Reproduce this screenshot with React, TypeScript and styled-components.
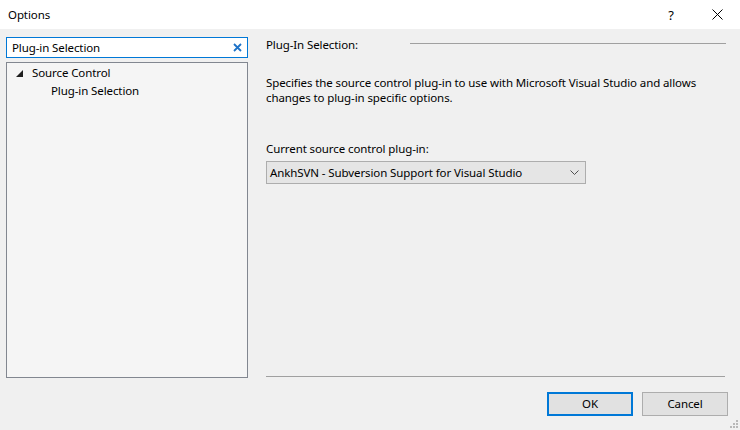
import React from "react";
import styled, { createGlobalStyle } from "styled-components";

const Global = createGlobalStyle`
  html, body { margin: 0; padding: 0; background: #f0f0f0; }
  body { font-family: "Noto Sans", "Segoe UI", sans-serif; font-size: 11.5px; letter-spacing: -0.1px; color: #000; }
`;

const Window = styled.div`
  width: 740px;
  height: 430px;
  display: flex;
  flex-direction: column;
  background: #f0f0f0;
  position: relative;
  overflow: hidden;
`;

const TitleBar = styled.div`
  height: 29px;
  background: #ffffff;
  display: flex;
  align-items: center;
  padding-left: 8px;
`;

const TitleText = styled.span`
  flex: 1;
  line-height: 16px;
`;

const TitleButton = styled.div<{ $w: number }>`
  width: ${(p) => p.$w}px;
  height: 29px;
  display: flex;
  align-items: center;
  justify-content: center;
  font-size: 13px;
`;

const Content = styled.div`
  flex: 1;
  display: flex;
  padding: 8px 14px 0 6px;
  gap: 18px;
  min-height: 0;
`;

const LeftCol = styled.div`
  width: 242px;
  display: flex;
  flex-direction: column;
  gap: 4px;
`;

const SearchBox = styled.div`
  height: 21px;
  box-sizing: border-box;
  border: 1px solid #0078d7;
  background: #fff;
  display: flex;
  align-items: center;
  padding: 0 5px 0 5px;
`;

const SearchText = styled.span`
  flex: 1;
  line-height: 16px;
`;

const Tree = styled.div`
  flex: 1;
  box-sizing: border-box;
  border: 1px solid #828790;
  background: #f5f5f5;
  padding-top: 1px;
`;

const TreeRow = styled.div<{ $indent: number }>`
  height: 18px;
  display: flex;
  align-items: center;
  padding-left: ${(p) => p.$indent}px;
  line-height: 16px;
`;

const Expander = styled.span`
  width: 16px;
  display: flex;
  align-items: center;
  margin-left: 9px;
`;

const RightCol = styled.div`
  flex: 1;
  display: flex;
  flex-direction: column;
`;

const Header = styled.div`
  display: flex;
  align-items: center;
  height: 16px;
`;

const HeaderText = styled.span`
  width: 144px;
  line-height: 16px;
`;

const HeaderRule = styled.div`
  flex: 1;
  height: 1px;
  background: #a0a0a0;
  margin-top: -4px;
`;

const Description = styled.p`
  margin: 22px 0 0 0;
  line-height: 15px;
  width: 450px;
`;

const Label = styled.div`
  margin-top: 36px;
  line-height: 16px;
`;

const Dropdown = styled.div`
  margin-top: 4px;
  width: 320px;
  height: 23px;
  box-sizing: border-box;
  border: 1px solid #adadad;
  background: #e5e5e5;
  display: flex;
  align-items: center;
  padding: 0 6px 0 3px;
`;

const DropdownText = styled.span`
  flex: 1;
  line-height: 16px;
`;

const Spacer = styled.div`
  flex: 1;
`;

const Separator = styled.div`
  height: 1px;
  background: #a0a0a0;
  margin-bottom: 1px;
  margin-right: 1px;
`;

const Footer = styled.div`
  height: 52px;
  display: flex;
  justify-content: flex-end;
  align-items: flex-start;
  padding: 14px 12px 0 0;
  box-sizing: border-box;
  gap: 9px;
`;

const Button = styled.div<{ $default?: boolean }>`
  width: 86px;
  height: 24px;
  box-sizing: border-box;
  border: ${(p) => (p.$default ? "2px solid #0078d7" : "1px solid #adadad")};
  background: #e1e1e1;
  display: flex;
  align-items: center;
  justify-content: center;
  line-height: 16px;
`;

const Grip = styled.svg`
  position: absolute;
  right: 1px;
  bottom: 1px;
`;

export default function App() {
  return (
    <>
      <Global />
      <Window>
        <TitleBar>
          <TitleText>Options</TitleText>
          <TitleButton $w={46}>?</TitleButton>
          <TitleButton $w={46}>
            <svg width="11" height="11" viewBox="0 0 11 11">
              <path d="M0.5 0.5 L10.5 10.5 M10.5 0.5 L0.5 10.5" stroke="#000" strokeWidth="1" />
            </svg>
          </TitleButton>
        </TitleBar>
        <Content>
          <LeftCol>
            <SearchBox>
              <SearchText>Plug-in Selection</SearchText>
              <svg width="9" height="9" viewBox="0 0 9 9">
                <path d="M1 1 L8 8 M8 1 L1 8" stroke="#1e73c8" strokeWidth="1.8" />
              </svg>
            </SearchBox>
            <Tree>
              <TreeRow $indent={0}>
                <Expander>
                  <svg width="7" height="7" viewBox="0 0 7 7">
                    <polygon points="7,0 7,7 0,7" fill="#1e1e1e" />
                  </svg>
                </Expander>
                Source Control
              </TreeRow>
              <TreeRow $indent={44}>Plug-in Selection</TreeRow>
            </Tree>
          </LeftCol>
          <RightCol>
            <Header>
              <HeaderText>Plug-In Selection:</HeaderText>
              <HeaderRule />
            </Header>
            <Description>
              Specifies the source control plug-in to use with Microsoft Visual Studio and allows changes to plug-in specific options.
            </Description>
            <Label>Current source control plug-in:</Label>
            <Dropdown>
              <DropdownText>AnkhSVN - Subversion Support for Visual Studio</DropdownText>
              <svg width="9" height="5" viewBox="0 0 9 5">
                <path d="M0.5 0.5 L4.5 4.5 L8.5 0.5" stroke="#505050" strokeWidth="1" fill="none" />
              </svg>
            </Dropdown>
            <Spacer />
            <Separator />
          </RightCol>
        </Content>
        <Footer>
          <Button $default>OK</Button>
          <Button>Cancel</Button>
        </Footer>
        <Grip width="10" height="10" viewBox="0 0 10 10">
          <rect x="7" y="1" width="2" height="2" fill="#b8b8b8" />
          <rect x="4" y="4" width="2" height="2" fill="#b8b8b8" />
          <rect x="7" y="4" width="2" height="2" fill="#b8b8b8" />
          <rect x="1" y="7" width="2" height="2" fill="#b8b8b8" />
          <rect x="4" y="7" width="2" height="2" fill="#b8b8b8" />
          <rect x="7" y="7" width="2" height="2" fill="#b8b8b8" />
        </Grip>
      </Window>
    </>
  );
}
